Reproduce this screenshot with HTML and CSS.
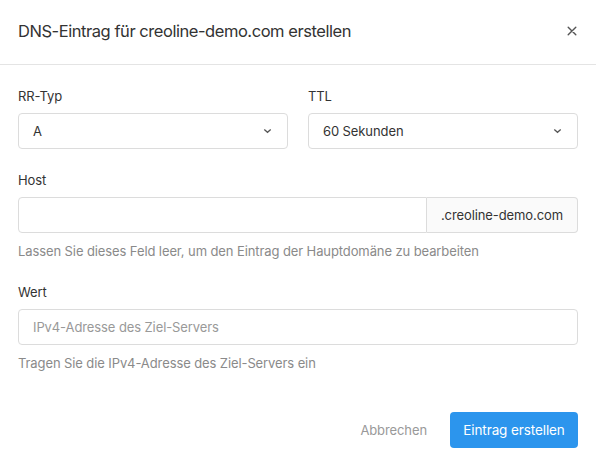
FILE: index.html
```html
<!DOCTYPE html>
<html lang="de">
<head>
<meta charset="utf-8">
<title>DNS-Eintrag</title>
<link rel="stylesheet" href="styles.css">
</head>
<body>
<div class="modal">
  <div class="modal-header">
    <h1 class="modal-title">DNS-Eintrag für creoline-demo.com erstellen</h1>
    <button class="close" aria-label="Schließen">
      <svg width="10" height="10" viewBox="0 0 10 10"><path d="M1.2 1.2L8.8 8.8M8.8 1.2L1.2 8.8" stroke="#555" stroke-width="1.4" stroke-linecap="round"/></svg>
    </button>
  </div>
  <div class="modal-body">
    <div class="row">
      <div class="field">
        <label class="label">RR-Typ</label>
        <div class="select"><span>A</span><svg class="chev" width="9" height="6" viewBox="0 0 9 6"><path d="M1.3 1.5L4.5 4.3L7.7 1.5" fill="none" stroke="#555" stroke-width="1.3"/></svg></div>
      </div>
      <div class="field">
        <label class="label">TTL</label>
        <div class="select"><span>60 Sekunden</span><svg class="chev" width="9" height="6" viewBox="0 0 9 6"><path d="M1.3 1.5L4.5 4.3L7.7 1.5" fill="none" stroke="#555" stroke-width="1.3"/></svg></div>
      </div>
    </div>
    <div class="field">
      <label class="label">Host</label>
      <div class="input-group">
        <div class="input grow"></div>
        <div class="addon">.creoline-demo.com</div>
      </div>
      <p class="help">Lassen Sie dieses Feld leer, um den Eintrag der Hauptdomäne zu bearbeiten</p>
    </div>
    <div class="field">
      <label class="label">Wert</label>
      <div class="input placeholder">IPv4-Adresse des Ziel-Servers</div>
      <p class="help">Tragen Sie die IPv4-Adresse des Ziel-Servers ein</p>
    </div>
  </div>
  <div class="modal-footer">
    <button class="btn-link">Abbrechen</button>
    <button class="btn-primary">Eintrag erstellen</button>
  </div>
</div>
</body>
</html>
```
FILE: styles.css
```css
* { box-sizing: border-box; }
html, body { margin: 0; padding: 0; background: #fff; }
body {
  font-family: Inter, "Liberation Sans", Arial, sans-serif;
  color: #333;
  width: 596px;
  height: 464px;
  overflow: hidden;
  letter-spacing: -0.1px;
}
.modal { width: 596px; }
.modal-header {
  height: 65px;
  border-bottom: 1px solid #e4e4e4;
  display: flex;
  align-items: center;
  justify-content: space-between;
  padding: 0 18px 2px 18px;
}
.modal-title {
  margin: 0;
  font-size: 16.5px;
  font-weight: 400;
  color: #333;
  letter-spacing: -0.45px;
}
.close {
  border: 0;
  background: none;
  padding: 0;
  width: 10px;
  height: 10px;
  display: flex;
  margin-right: 1px;
}
.modal-body {
  padding: 21px 18px 0 18px;
  display: flex;
  flex-direction: column;
  gap: 21px;
}
.row {
  display: grid;
  grid-template-columns: 1fr 1fr;
  gap: 20px;
}
.field { display: flex; flex-direction: column; }
.label {
  font-size: 13px;
  line-height: 20px;
  margin-bottom: 7px;
  color: #333;
}
.select, .input {
  height: 36px;
  border: 1px solid #dcdcdc;
  border-radius: 4px;
  display: flex;
  align-items: center;
  justify-content: space-between;
  padding: 0 14px 0 14px;
  font-size: 13px;
  color: #333;
  background: #fff;
}
.select .chev { margin-right: 1px; }
.input-group { display: flex; }
.input.grow {
  flex: 1;
  border-radius: 4px 0 0 4px;
}
.addon {
  height: 36px;
  width: 151px;
  border: 1px solid #dcdcdc;
  border-left: 0;
  border-radius: 0 4px 4px 0;
  background: #fafafa;
  display: flex;
  align-items: center;
  justify-content: center;
  font-size: 13px;
  color: #333;
}
.placeholder { color: #999; }
.help {
  margin: 8px 0 0 0;
  font-size: 13px;
  line-height: 20px;
  color: #8a8a8a;
}
.modal-footer {
  display: flex;
  justify-content: flex-end;
  align-items: center;
  gap: 23px;
  padding: 39px 18px 0 18px;
}
.btn-link {
  border: 0;
  background: none;
  font-family: inherit;
  letter-spacing: inherit;
  font-size: 13px;
  color: #999;
  padding: 0;
}
.btn-primary {
  border: 0;
  background: #2c95ed;
  color: #fff;
  font-family: inherit;
  letter-spacing: inherit;
  font-size: 13.5px;
  height: 36px;
  width: 128px;
  border-radius: 4px;
}
```
